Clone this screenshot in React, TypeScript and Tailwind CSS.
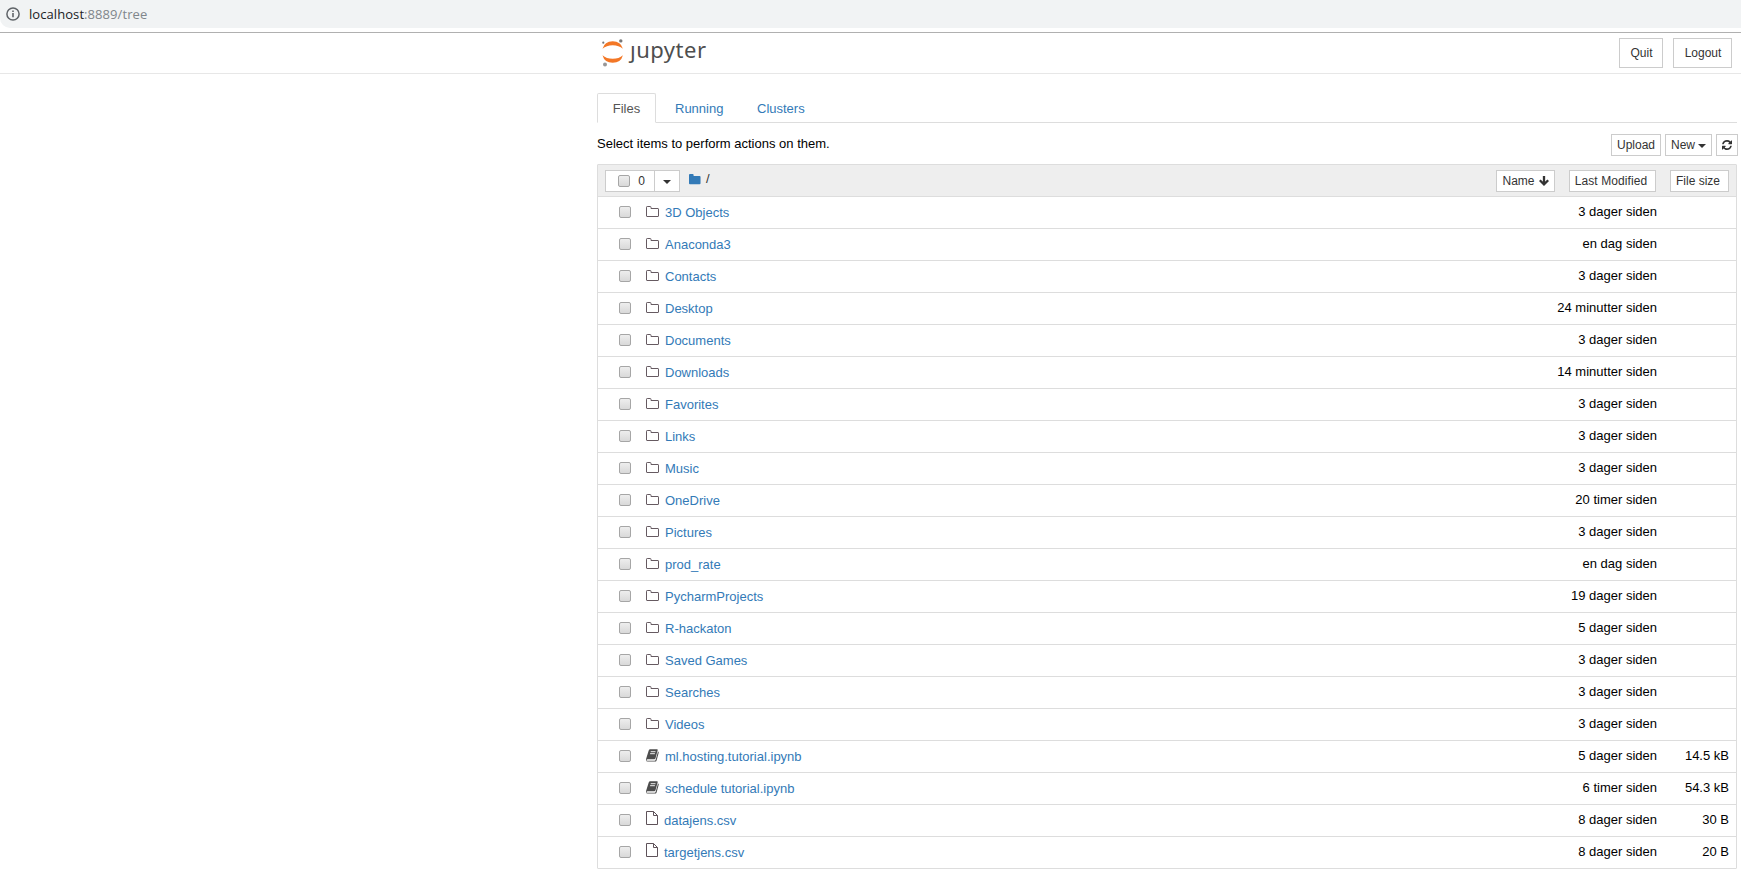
import React from "react";

type Kind = "folder" | "notebook" | "file";
type Entry = { name: string; modified: string; size?: string; kind: Kind };

const dir = (name: string, modified = "3 dager siden"): Entry => ({ name, modified, kind: "folder" });

const entries: Entry[] = [
  dir("3D Objects"),
  dir("Anaconda3", "en dag siden"),
  dir("Contacts"),
  dir("Desktop", "24 minutter siden"),
  dir("Documents"),
  dir("Downloads", "14 minutter siden"),
  dir("Favorites"),
  dir("Links"),
  dir("Music"),
  dir("OneDrive", "20 timer siden"),
  dir("Pictures"),
  dir("prod_rate", "en dag siden"),
  dir("PycharmProjects", "19 dager siden"),
  dir("R-hackaton", "5 dager siden"),
  dir("Saved Games"),
  dir("Searches"),
  dir("Videos"),
  { name: "ml.hosting.tutorial.ipynb", modified: "5 dager siden", size: "14.5 kB", kind: "notebook" },
  { name: "schedule tutorial.ipynb", modified: "6 timer siden", size: "54.3 kB", kind: "notebook" },
  { name: "datajens.csv", modified: "8 dager siden", size: "30 B", kind: "file" },
  { name: "targetjens.csv", modified: "8 dager siden", size: "20 B", kind: "file" },
];

function Checkbox() {
  return (
    <span className="block h-3 w-3 shrink-0 rounded-[2px] border border-[#a6a6a6] bg-linear-to-b from-[#eeeeee] to-[#d9d9d9]" />
  );
}

function EntryIcon({ kind }: { kind: Kind }) {
  if (kind === "folder") {
    return (
      <svg width="14" height="12" viewBox="0 0 14 12" className="mb-px" fill="none" stroke="#665a61">
        <path d="M.5 1.200q0-.7.7-.7h3q.8 0 .8.800v1.200h7q.5 0 .5.600v7q0 .4-.5.400H1q-.5 0-.5-.5z" />
      </svg>
    );
  }
  if (kind === "notebook") {
    return (
      <svg width="14" height="13" viewBox="0 0 14 13" className="mb-[2px]">
        <path d="M4.200.300H11q1 0 .700 1L9.500 9.200q-.3 1-1.300 1H1.500q-1 0-.9 1 .2.600 1 .600h7q.7 0 1-.7L12 2.500q1 .300.700 1.200l-2.100 7.700q-.400 1.200-1.600 1.200H1.700Q0 12.500 0 10.700q0-.4.300-1.400L2.700 1.500Q3.100.300 4.200.300z" fill="#4d4d4d" />
        <path d="M4.700 2.700h4.800M4.100 4.700h4.800" stroke="#fff" strokeWidth=".9" />
      </svg>
    );
  }
  return (
    <svg width="13" height="15" viewBox="0 0 13 15" className="mb-[4px]" fill="none" stroke="#5e5259">
      <path d="M.5.5h7l4 4v9H.5zM7.500.5v4h4" />
    </svg>
  );
}

function Caret() {
  return <span className="mt-px block border-x-4 border-t-4 border-x-transparent border-t-[#333]" />;
}

function Button({ className, children }: { className: string; children: React.ReactNode }) {
  return (
    <button
      className={"flex shrink-0 items-center justify-center whitespace-nowrap border border-[#ccc] bg-white text-[12px] leading-none text-[#333] " + className}
    >
      {children}
    </button>
  );
}

export default function App() {
  return (
    <div className="h-[875px] w-[1741px] overflow-hidden bg-white font-['Liberation_Sans',Arial,sans-serif] text-[13px] text-black">
      <div className="flex h-7 items-center rounded-bl-[10px] bg-[#f1f3f4] pl-[6px]">
        <svg width="14" height="14" viewBox="0 0 14 14" fill="none" stroke="#5f6368" strokeWidth="1.500">
          <circle cx="7" cy="7" r="6.100" />
          <path d="M7 6v4.300M7 3.600v1.500" strokeWidth="1.600" />
        </svg>
        <span className="ml-[9px] font-['Open_Sans',sans-serif] text-[13px] leading-none tracking-[0.070px] text-[#202124]">
          localhost<span className="text-[#80868b]">:8889/tree</span>
        </span>
      </div>
      <header className="mt-1 flex h-[42px] justify-between border-t border-b border-t-[#b0b0b0] border-b-[#e7e7e7] pr-[9px] pl-[601px]">
        <div className="flex">
          <svg width="24" height="30" viewBox="0 0 24 30" className="mt-[5px]">
            <path d="M1.500 10.800Q3.500 3.300 11.700 3.300t10.200 7.500Q18 7.300 11.700 7.300T1.500 10.800zM1.500 17.200Q5.400 20.800 11.700 20.800t10.200-3.600Q19.900 24.800 11.700 24.800T1.500 17.200z" fill="#f37726" />
            <circle cx="19.800" cy="2.900" r="1.700" fill="#767677" />
            <circle cx="2.300" cy="4.700" r="1.100" fill="#767677" />
            <circle cx="4" cy="26.500" r="2" fill="#989798" />
          </svg>
          <span className="-mt-px ml-[5px] flex font-['Noto_Sans',sans-serif] text-[22px] leading-[34px] tracking-[0.500px] text-[#4e4e4e]">
            <span className="block [clip-path:inset(13px_0_0_-6px)]">j</span>
            <span>upyter</span>
          </span>
        </div>
        <div className="flex gap-[10px] pt-[5px]">
          <Button className="h-[30px] w-[44px] pl-px">Quit</Button>
          <Button className="h-[30px] w-[59px] pl-px">Logout</Button>
        </div>
      </header>

      <main className="ml-[597px] w-[1140px] pt-[19px]">
        <nav className="flex h-[30px] border-b border-[#ddd] leading-[30px] text-[#337ab7]">
          <span className="h-[30px] w-[59px] rounded-t-[2px] border border-[#ddd] border-b-white bg-white text-center text-[#555]">Files</span>
          <span className="ml-[19px] w-[49px] pt-px">Running</span>
          <span className="ml-[33px] pt-px">Clusters</span>
        </nav>
        <div className="-mr-[1px] flex h-[41px] justify-between pt-[11px]">
          <span className="pt-px leading-[18px]">Select items to perform actions on them.</span>
          <div className="flex gap-1">
            <Button className="h-[22px] w-[50px]">Upload</Button>
            <Button className="h-[22px] w-[47px] gap-[3px]">
              New <Caret />
            </Button>
            <Button className="h-[22px] w-[22px]">
              <svg width="10" height="10" viewBox="128 128 1536 1536" fill="#333">
                <path d="M1639 1056q0 5-1 7-64 268-268 434.500T892 1664q-146 0-282.500-55T366 1452l-129 129q-19 19-45 19t-45-19-19-45v-448q0-26 19-45t45-19h448q26 0 45 19t19 45-19 45l-137 137q71 66 161 102t187 36q134 0 250-65t186-179q11-17 53-117 8-23 30-23h192q13 0 22.500 9.500t9.500 22.500zm25-800v448q0 26-19 45t-45 19h-448q-26 0-45-19t-19-45 19-45l138-138Q1097 384 896 384q-134 0-250 65T460 628q-11 17-53 117-8 23-30 23H178q-13 0-22.500-9.500T146 736v-7q65-268 270-434.500T896 128q146 0 284 55.500T1425 340l130-129q19-19 45-19t45 19 19 45z" />
              </svg>
            </Button>
          </div>
        </div>

        <section className="rounded-[1px] border border-[#ddd]">
          <div className="flex h-8 justify-between border-b border-[#ddd] bg-[#eee] pt-[5px] pr-[7px] pl-[7px]">
            <div className="flex">
              <Button className="h-[22px] w-[50px] gap-[8px] pl-[3px]">
                <span className="pb-px">
                  <Checkbox />
                </span>
                <span>0</span>
              </Button>
              <Button className="-ml-px h-[22px] w-[26px]">
                <Caret />
              </Button>
              <svg width="12" height="11" viewBox="0 0 13 11" preserveAspectRatio="none" className="mt-[4px] ml-[9px]">
                <path d="M0 1Q0 0 1 0H4q1 0 1 1V2h6.500q1 0 1 1v6.200q0 1-1 1H1Q0 10.200 0 9.200z" fill="#337ab7" />
              </svg>
              <span className="ml-[5px] leading-[18px] text-[#333]">/</span>
            </div>
            <div className="flex">
              <Button className="h-[22px] w-[59px] gap-[4px]">
                Name
                <svg width="10" height="10" viewBox="0 0 10 10" fill="none" stroke="#333" strokeWidth="2.300">
                  <path d="M5 0v8.300M.8 4.200L5 8.300l4.200-4.100" />
                </svg>
              </Button>
              <Button className="ml-[14px] h-[22px] w-[87px] pr-[3px] tracking-[0.080px]">Last Modified</Button>
              <Button className="ml-[14px] h-[22px] w-[59px] pr-[3px]">File size</Button>
            </div>
          </div>
          {entries.map((e) => (
            <div key={e.name} className="flex h-8 items-center border-b border-[#ddd] pr-[7px] pl-[21px] last:h-[31px] last:border-b-0">
              <span className="pb-px">
                <Checkbox />
              </span>
              <span className="ml-[15px] flex w-[19px] shrink-0">
                <EntryIcon kind={e.kind} />
              </span>
              <a className={e.kind === "file" ? "-ml-px grow leading-[18px] text-[#337ab7]" : "grow leading-[18px] text-[#337ab7]"}>{e.name}</a>
              <span className="pb-[2px] leading-[18px]">{e.modified}</span>
              <span className="w-[72px] pb-[2px] text-right leading-[18px]">{e.size}</span>
            </div>
          ))}
        </section>
      </main>
    </div>
  );
}
